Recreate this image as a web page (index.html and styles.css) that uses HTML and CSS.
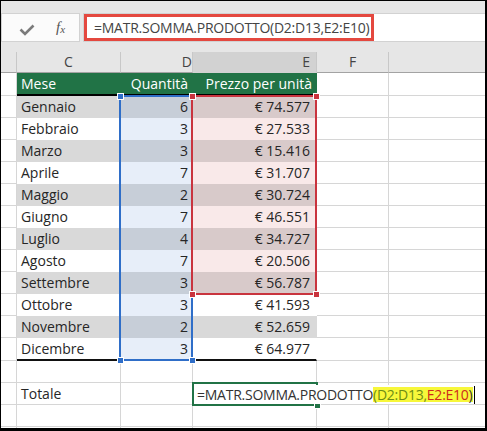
FILE: index.html
```html
<!DOCTYPE html>
<html>

<head>
  <title>MATR.SOMMA.PRODOTTO</title>
  <link rel="stylesheet" href="styles.css">
</head>

<body>
  <div class="sheet">
    <div class="ribbon"></div>

    <div class="fbar">
      <div class="fbtns">
        <svg class="check" width="16" height="12" viewBox="0 0 16 12">
          <polyline points="1.5,5.5 6,10 14.5,1.5" fill="none" stroke="#7b7b7b" stroke-width="2.6" />
        </svg>
        <span class="fx">f<sub>x</sub></span>
      </div>
      <div class="finput">
        <div class="fedit">=MATR.SOMMA.PRODOTTO(D2:D13,E2:E10)</div>
      </div>
    </div>

    <div class="colheads">
      <div class="ch a"></div>
      <div class="ch c">C</div>
      <div class="ch d">D</div>
      <div class="ch e cur">E</div>
      <div class="ch f">F</div>
      <div class="ch g"></div>
    </div>

    <div class="grid">
      <div class="row head">
        <div class="cell a"></div>
        <div class="cell c t">Mese</div>
        <div class="cell d t">Quantità</div>
        <div class="cell e t">Prezzo per unità</div>
        <div class="cell f"></div>
        <div class="cell g"></div>
      </div>
      <div class="row band">
        <div class="cell a"></div>
        <div class="cell c t">Gennaio</div>
        <div class="cell d t">6</div>
        <div class="cell e t hl">€ 74.577</div>
        <div class="cell f"></div>
        <div class="cell g"></div>
      </div>
      <div class="row">
        <div class="cell a"></div>
        <div class="cell c t">Febbraio</div>
        <div class="cell d t">3</div>
        <div class="cell e t hl">€ 27.533</div>
        <div class="cell f"></div>
        <div class="cell g"></div>
      </div>
      <div class="row band">
        <div class="cell a"></div>
        <div class="cell c t">Marzo</div>
        <div class="cell d t">3</div>
        <div class="cell e t hl">€ 15.416</div>
        <div class="cell f"></div>
        <div class="cell g"></div>
      </div>
      <div class="row">
        <div class="cell a"></div>
        <div class="cell c t">Aprile</div>
        <div class="cell d t">7</div>
        <div class="cell e t hl">€ 31.707</div>
        <div class="cell f"></div>
        <div class="cell g"></div>
      </div>
      <div class="row band">
        <div class="cell a"></div>
        <div class="cell c t">Maggio</div>
        <div class="cell d t">2</div>
        <div class="cell e t hl">€ 30.724</div>
        <div class="cell f"></div>
        <div class="cell g"></div>
      </div>
      <div class="row">
        <div class="cell a"></div>
        <div class="cell c t">Giugno</div>
        <div class="cell d t">7</div>
        <div class="cell e t hl">€ 46.551</div>
        <div class="cell f"></div>
        <div class="cell g"></div>
      </div>
      <div class="row band">
        <div class="cell a"></div>
        <div class="cell c t">Luglio</div>
        <div class="cell d t">4</div>
        <div class="cell e t hl">€ 34.727</div>
        <div class="cell f"></div>
        <div class="cell g"></div>
      </div>
      <div class="row">
        <div class="cell a"></div>
        <div class="cell c t">Agosto</div>
        <div class="cell d t">7</div>
        <div class="cell e t hl">€ 20.506</div>
        <div class="cell f"></div>
        <div class="cell g"></div>
      </div>
      <div class="row band">
        <div class="cell a"></div>
        <div class="cell c t">Settembre</div>
        <div class="cell d t">3</div>
        <div class="cell e t hl">€ 56.787</div>
        <div class="cell f"></div>
        <div class="cell g"></div>
      </div>
      <div class="row">
        <div class="cell a"></div>
        <div class="cell c t">Ottobre</div>
        <div class="cell d t">3</div>
        <div class="cell e t">€ 41.593</div>
        <div class="cell f"></div>
        <div class="cell g"></div>
      </div>
      <div class="row band">
        <div class="cell a"></div>
        <div class="cell c t">Novembre</div>
        <div class="cell d t">2</div>
        <div class="cell e t">€ 52.659</div>
        <div class="cell f"></div>
        <div class="cell g"></div>
      </div>
      <div class="row last">
        <div class="cell a"></div>
        <div class="cell c t">Dicembre</div>
        <div class="cell d t">3</div>
        <div class="cell e t">€ 64.977</div>
        <div class="cell f"></div>
        <div class="cell g"></div>
      </div>
      <div class="row">
        <div class="cell a"></div>
        <div class="cell c"></div>
        <div class="cell d"></div>
        <div class="cell e"></div>
        <div class="cell f"></div>
        <div class="cell g"></div>
      </div>
      <div class="row">
        <div class="cell a"></div>
        <div class="cell c">Totale</div>
        <div class="cell d"></div>
        <div class="cell e"></div>
        <div class="cell f"></div>
        <div class="cell g"></div>
      </div>
      <div class="row">
        <div class="cell a"></div>
        <div class="cell c"></div>
        <div class="cell d"></div>
        <div class="cell e"></div>
        <div class="cell f"></div>
        <div class="cell g"></div>
      </div>
      <div class="row">
        <div class="cell a"></div>
        <div class="cell c"></div>
        <div class="cell d"></div>
        <div class="cell e"></div>
        <div class="cell f"></div>
        <div class="cell g"></div>
      </div>

      <!-- range highlights drawn over the cells -->
      <div class="range blue"></div>
      <div class="range red"></div>
      <span class="knob kb" style="left:116px; top:20px"></span>
      <span class="knob kb" style="left:116px; top:284px"></span>
      <span class="knob kb" style="left:188px; top:284px"></span>
      <span class="knob kr" style="left:188px; top:20px"></span>
      <span class="knob kr" style="left:312px; top:20px"></span>
      <span class="knob kr" style="left:188px; top:218px"></span>
      <span class="knob kr" style="left:312px; top:218px"></span>

      <div class="active"></div>
      <span class="knob kg" style="left:313px; top:329px"></span>
      <div class="editor">=MATR.SOMMA.PRODOTTO<span class="mark"><span class="r1">(D2:D13,</span><span class="r2">E2:E10</span>)</span><span class="caret"></span></div>
    </div>
  </div>
</body>

</html>
```

FILE: styles.css
```css
body {
  margin: 0;
  font-family: "Open Sans", "Noto Sans", sans-serif;
}

.sheet {
  width: 487px;
  height: 431px;
  box-sizing: border-box;
  border: 1px solid #000;
  border-right-width: 2px;
  border-bottom-width: 3px;
  background: #e6e6e6;
  overflow: hidden;
}

.ribbon {
  height: 12px;
}

/* formula bar */
.fbar {
  display: flex;
  height: 29px;
  gap: 3px;
}

.fbtns {
  width: 79px;
  box-sizing: border-box;
  border: 1px solid #d2d2d2;
  background: #fbfbfb;
  display: flex;
  align-items: center;
}

.check {
  margin-left: 17px;
  margin-top: 4px;
}

.fx {
  margin-left: 21px;
  font-family: "Liberation Serif", serif;
  font-style: italic;
  font-size: 15px;
  color: #555;
}

.fx sub {
  font-size: 11px;
  vertical-align: -1px;
}

.finput {
  flex: 1;
  background: #fff;
  border: 1px solid #d2d2d2;
  border-right: none;
  display: flex;
  align-items: stretch;
}

.fedit {
  width: 290px;
  box-sizing: border-box;
  border: 3px solid #e4483f;
  padding-left: 7px;
  font-size: 14px;
  letter-spacing: -0.25px;
  line-height: 21px;
  color: #444;
  white-space: nowrap;
}

/* column letters */
.colheads {
  display: flex;
  height: 21px;
  margin-top: 10px;
}

.ch {
  box-sizing: border-box;
  border-right: 1px solid #c8c8c8;
  border-bottom: 1px solid #a3a3a3;
  text-align: center;
  font-size: 14px;
  line-height: 20px;
  color: #444;
}

.ch.cur {
  background: #d2d2d2;
  border-bottom-color: #d2d2d2;
}

.ch.g {
  border-right: none;
}

/* cells */
.grid {
  position: relative;
  background: #fff;
  height: 360px;
}

.row {
  display: flex;
  height: 22px;
}

.cell {
  box-sizing: border-box;
  height: 100%;
  border-right: 1px solid #d6d6d6;
  border-bottom: 1px solid #d6d6d6;
  padding: 0 4px;
  font-size: 14px;
  line-height: 21px;
  color: #262626;
  white-space: nowrap;
}

.a { width: 16px; }
.c { width: 104px; }
.d { width: 72px; text-align: right; }
.e { width: 124px; text-align: right; padding-right: 6px; }
.f { width: 72px; }
.g { flex: 1; border-right: none; }

.t {
  border-color: transparent;
  background: #fff;
}

.band .t { background: #d9d9d9; }
.t.d { background: #e7eef9; }
.band .t.d { background: #c7ced8; }
.t.hl { background: #f9e9e9; }
.band .t.hl { background: #d8caca; }

.head,
.last {
  height: 23px;
}

.head .t {
  background: #217346;
  color: #fff;
  border-bottom: 2px solid #000;
  padding-right: 4px;
}

.last .t {
  border-bottom: 2px solid #111;
}

/* range outlines */
.range {
  position: absolute;
  box-sizing: border-box;
  border: 2px solid;
}

.blue {
  left: 118px;
  top: 22px;
  width: 74px;
  height: 266px;
  border-color: #2f6ec8;
}

.red {
  left: 190px;
  top: 22px;
  width: 126px;
  height: 200px;
  border-color: #c9343e;
}

.knob {
  position: absolute;
  width: 5px;
  height: 5px;
  border: 1px solid #fff;
}

.kb { background: #2f6ec8; }
.kr { background: #c9343e; }
.kg { background: #217346; }

.active {
  position: absolute;
  left: 191px;
  top: 309px;
  width: 126px;
  height: 24px;
  box-sizing: border-box;
  border: 2px solid #217346;
}

.editor {
  position: absolute;
  left: 193px;
  top: 312px;
  height: 19px;
  padding: 0 4px 0 3px;
  background: #fff;
  font-size: 14px;
  letter-spacing: -0.25px;
  line-height: 19px;
  color: #333;
  white-space: nowrap;
}

.mark {
  display: inline-block;
  line-height: 15px;
  background: #f7f73a;
}

.r1 { color: #6d8c14; }
.r2 { color: #cc2a1c; }

.caret {
  display: inline-block;
  width: 1px;
  height: 18px;
  margin-left: 1px;
  vertical-align: -4px;
  background: #000;
}
```
